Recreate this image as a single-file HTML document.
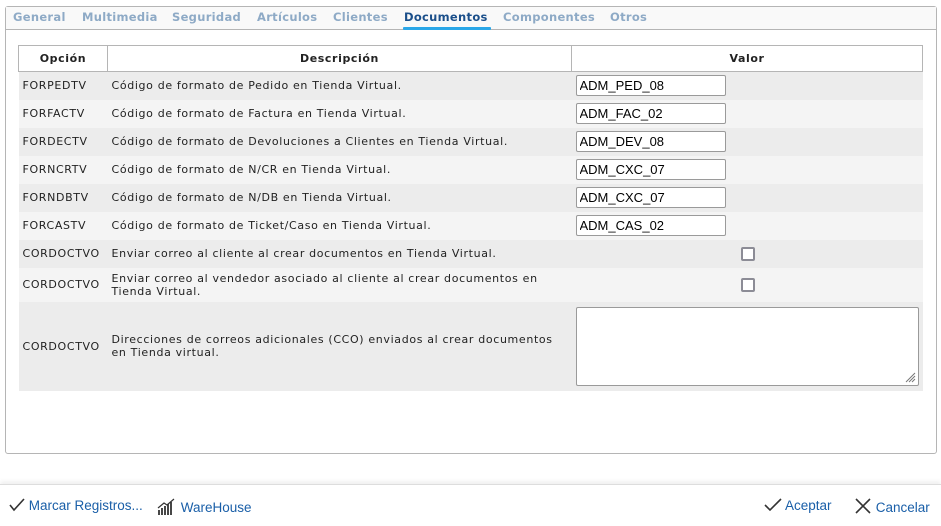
<!DOCTYPE html>
<html><head><meta charset="utf-8"><style>
*{box-sizing:border-box;margin:0;padding:0}
body{width:941px;height:526px;background:#fff;font-family:"DejaVu Sans","Liberation Sans",sans-serif;font-size:11px;color:#222;position:relative;overflow:hidden}
.panel{position:absolute;left:5px;top:6px;width:932px;height:448px;border:1px solid #b5b5b5;border-radius:3px}
.tabs{position:absolute;left:0;top:0;right:0;height:23px;border-bottom:1px solid #b5b5b5;background:#f9f9f9}
.tab{position:absolute;top:3px;font-weight:bold;font-size:11.5px;color:#8eaac6;letter-spacing:0.3px}
.tab.act{color:#1b4f8a}
.ul{position:absolute;left:397px;top:20px;width:88px;height:3px;background:#2aa7e8;border-radius:1px}
table{position:absolute;left:18px;top:45px;width:905px;border-collapse:collapse}
th{height:26px;border:1px solid #b5b5b5;font-weight:bold;font-size:11px;background:#fff;letter-spacing:0.6px}
td{height:28px;padding:0 4px;font-size:11px;letter-spacing:0.65px}
tr.a td{background:#ececec}tr.b td{background:#f4f4f4}
input.t{width:150px;height:21px;border:1px solid #9a9a9a;border-radius:2px;font-family:"Liberation Sans",sans-serif;font-size:13px;padding:0 3px;background:#fff}
.cb{display:inline-block;width:14px;height:14px;border:2px solid #8c8c96;border-radius:2px;background:#fff;margin-left:165px;vertical-align:middle}
.ta{width:343px;height:79px;border:1px solid #9a9a9a;border-radius:2px;background:#fff;position:relative}
.foot{position:absolute;left:0;top:484px;width:941px;height:42px;border-top:1px solid #ddd;box-shadow:0 -3px 4px rgba(0,0,0,.06)}
.fb{position:absolute;top:13px;font-family:"Liberation Sans",sans-serif;font-size:13.5px;color:#1a5fa8}
</style></head><body>
<div class="panel">
<div class="tabs">
<span class="tab" style="left:7px">General</span>
<span class="tab" style="left:76px">Multimedia</span>
<span class="tab" style="left:166px">Seguridad</span>
<span class="tab" style="left:251px">Artículos</span>
<span class="tab" style="left:327px">Clientes</span>
<span class="tab act" style="left:398px">Documentos</span>
<span class="tab" style="left:497px">Componentes</span>
<span class="tab" style="left:604px">Otros</span>
<div class="ul"></div>
</div>
</div>
<table>
<tr><th style="width:89px">Opción</th><th style="width:465px">Descripción</th><th>Valor</th></tr>
<tr class="a"><td>FORPEDTV</td><td>Código de formato de Pedido en Tienda Virtual.</td><td><input class="t" value="ADM_PED_08"></td></tr>
<tr class="b"><td>FORFACTV</td><td>Código de formato de Factura en Tienda Virtual.</td><td><input class="t" value="ADM_FAC_02"></td></tr>
<tr class="a"><td>FORDECTV</td><td>Código de formato de Devoluciones a Clientes en Tienda Virtual.</td><td><input class="t" value="ADM_DEV_08"></td></tr>
<tr class="b"><td>FORNCRTV</td><td>Código de formato de N/CR en Tienda Virtual.</td><td><input class="t" value="ADM_CXC_07"></td></tr>
<tr class="a"><td>FORNDBTV</td><td>Código de formato de N/DB en Tienda Virtual.</td><td><input class="t" value="ADM_CXC_07"></td></tr>
<tr class="b"><td>FORCASTV</td><td>Código de formato de Ticket/Caso en Tienda Virtual.</td><td><input class="t" value="ADM_CAS_02"></td></tr>
<tr class="a"><td>CORDOCTVO</td><td>Enviar correo al cliente al crear documentos en Tienda Virtual.</td><td><span class="cb"></span></td></tr>
<tr class="b"><td style="height:34px">CORDOCTVO</td><td>Enviar correo al vendedor asociado al cliente al crear documentos en Tienda Virtual.</td><td><span class="cb"></span></td></tr>
<tr class="a"><td style="height:89px">CORDOCTVO</td><td>Direcciones de correos adicionales (CCO) enviados al crear documentos en Tienda virtual.</td><td><div class="ta"><svg style="position:absolute;right:2px;bottom:2px" width="12" height="12"><path d="M11 2L2 11M11 5L5 11M11 8L8 11" stroke="#777" stroke-width="1"/></svg></div></td></tr>
</table>
<div class="foot">
<span class="fb" style="left:9px"><svg width="16" height="14" style="vertical-align:-2px"><path d="M1 7L5 12L15 1" fill="none" stroke="#333" stroke-width="1.6"/></svg> Marcar Registros...</span>
<span class="fb" style="left:157px"><svg width="20" height="18" style="vertical-align:-4px"><path d="M2 17v-5M5 17v-7M8 17v-9M11 17v-11M14 17v-13" stroke="#333" stroke-width="1.8"/><path d="M1 10L7 5L10 7L17 1" fill="none" stroke="#333" stroke-width="1.2"/></svg> WareHouse</span>
<span class="fb" style="left:764px"><svg width="18" height="14" style="vertical-align:-2px"><path d="M1 7L6 12L17 1" fill="none" stroke="#333" stroke-width="1.6"/></svg> Aceptar</span>
<span class="fb" style="left:854px"><svg width="18" height="16" style="vertical-align:-2px"><path d="M2 1L16 15M16 1L2 15" stroke="#333" stroke-width="1.6"/></svg> Cancelar</span>
</div>
</body></html>
